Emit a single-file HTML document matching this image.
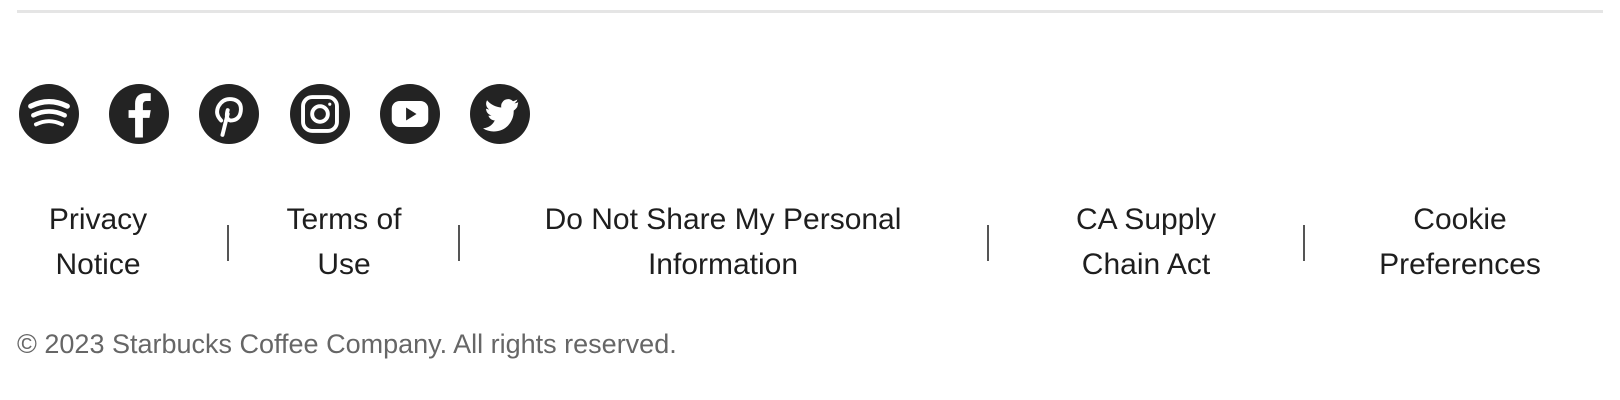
<!DOCTYPE html>
<html><head><style>
body{margin:0;width:1620px;height:400px;background:#fff;position:relative;overflow:hidden;font-family:"Liberation Sans",sans-serif;}
.hr{position:absolute;left:17px;right:17px;top:10px;height:3px;background:#e5e5e5;}
.ic{position:absolute;top:84px;width:60px;height:60px;border-radius:50%;background:#232323;}
.ic svg{position:absolute;left:0;top:0;}
.l{position:absolute;top:197px;font-size:30px;line-height:45px;color:#1e1e1e;text-align:center;transform:translateX(-50%);white-space:nowrap;}
.s{position:absolute;top:225px;width:2px;height:36px;background:#555;}
.c{position:absolute;left:17px;top:329px;font-size:27px;color:#666;white-space:nowrap;}
</style></head><body>
<div class="hr"></div>
<div class="ic" style="left:19px"><svg width="60" height="60" viewBox="5 5 46 46" fill="none" stroke="#fff" stroke-linecap="round"><path d="M14 22 Q28 15 42 22" stroke-width="4"/><path d="M16 29 Q28 23 40 29" stroke-width="3.5"/><path d="M18 36 Q28 31 38 36" stroke-width="3"/></svg></div>
<div class="ic" style="left:109px"><svg width="60" height="60" viewBox="5 5 46 46"><path d="M25 46V31h-5v-6h5v-5c0-5 3-8 8-8h4v6h-3c-2 0-3 1-3 3v4h6l-1 6h-5v15z" fill="#fff"/></svg></div>
<div class="ic" style="left:199px"><svg width="60" height="60" viewBox="5 5 46 46" fill="none" stroke="#fff" stroke-width="3" stroke-linecap="round"><path d="M22 33 Q17 28 20 22 Q24 15 32 17 Q38 19 37 26 Q36 33 29 33 Q25 32 27 25"/><path d="M27 28 L23 44"/></svg></div>
<div class="ic" style="left:290px"><svg width="60" height="60" viewBox="5 5 46 46" fill="none" stroke="#fff" stroke-width="3"><rect x="15" y="15" width="26" height="26" rx="7"/><circle cx="28" cy="28" r="6"/><circle cx="35.5" cy="20.5" r="1.2" fill="#fff" stroke="none"/></svg></div>
<div class="ic" style="left:380px"><svg width="60" height="60" viewBox="5 5 46 46"><rect x="14" y="18" width="28" height="20" rx="6" fill="#fff"/><path d="M25 23v10l8-5z" fill="#232323"/></svg></div>
<div class="ic" style="left:470px"><svg width="60" height="60" viewBox="5 5 46 46"><path d="M42 19c-1 .5-2 .8-3 .9 1-.7 2-1.7 2.3-3-1 .6-2.2 1-3.3 1.3a5.3 5.3 0 0 0-9 4.8c-4.4-.2-8.3-2.3-10.9-5.5-1.5 2.5-.6 5.5 1.6 7-.9 0-1.7-.3-2.4-.6 0 2.6 1.8 4.7 4.2 5.2-.8.2-1.6.3-2.4.1.7 2.1 2.6 3.6 4.9 3.7A10.6 10.6 0 0 1 15 39c2.4 1.5 5.2 2.4 8.2 2.4 9.9 0 15.3-8.2 15.3-15.3v-.7c1-.8 2-1.7 2.7-2.8z" fill="#fff"/></svg></div>
<div class="l" style="left:98px">Privacy<br>Notice</div>
<div class="s" style="left:227px"></div>
<div class="l" style="left:344px">Terms of<br>Use</div>
<div class="s" style="left:458px"></div>
<div class="l" style="left:723px">Do Not Share My Personal<br>Information</div>
<div class="s" style="left:987px"></div>
<div class="l" style="left:1146px">CA Supply<br>Chain Act</div>
<div class="s" style="left:1303px"></div>
<div class="l" style="left:1460px">Cookie<br>Preferences</div>
<div class="c">© 2023 Starbucks Coffee Company. All rights reserved.</div>
</body></html>
